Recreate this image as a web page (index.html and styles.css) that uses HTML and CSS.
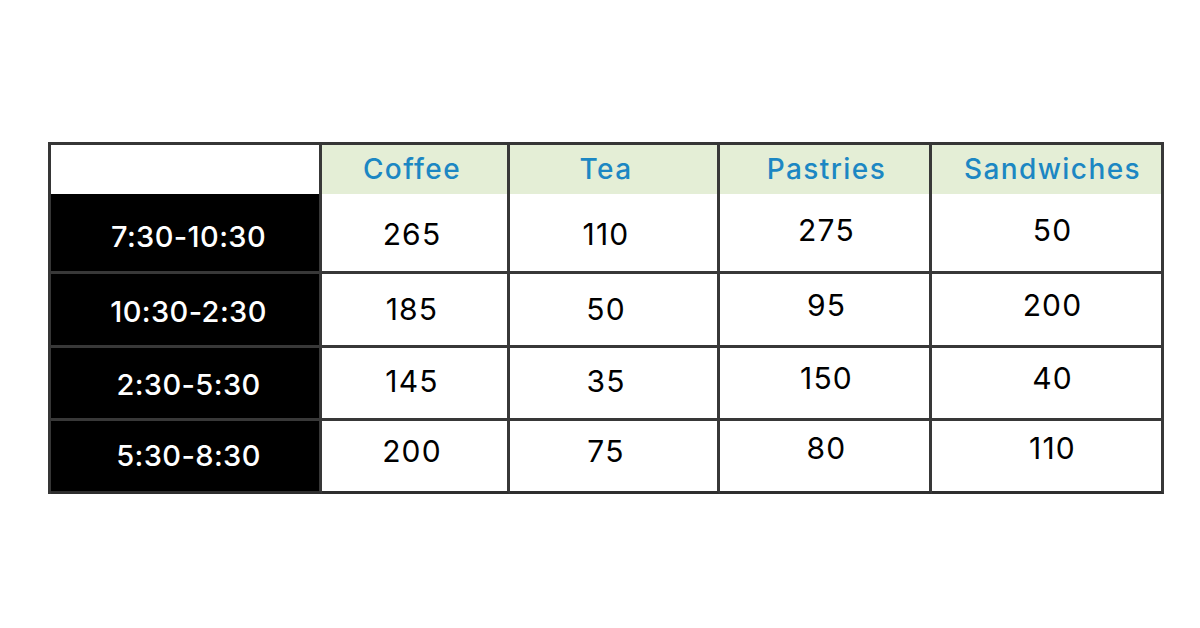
FILE: index.html
```html
<!DOCTYPE html>
<html lang="en">
<head>
<meta charset="utf-8">
<title>Sales by time of day</title>
<link rel="stylesheet" href="styles.css">
</head>
<body>
<main class="page">
  <div class="sales" role="table">
    <div class="row head-row" role="row">
      <div class="cell head blank" role="columnheader"></div>
      <div class="cell head c2" role="columnheader">Coffee</div>
      <div class="cell head c3" role="columnheader">Tea</div>
      <div class="cell head c4" role="columnheader">Pastries</div>
      <div class="cell head c5" role="columnheader">Sandwiches</div>
    </div>
    <div class="row r1" role="row">
      <div class="cell label" role="rowheader">7:30-10:30</div>
      <div class="cell val c2">265</div>
      <div class="cell val c3">110</div>
      <div class="cell val up c4">275</div>
      <div class="cell val up c5">50</div>
    </div>
    <div class="row r2" role="row">
      <div class="cell label" role="rowheader">10:30-2:30</div>
      <div class="cell val c2">185</div>
      <div class="cell val c3">50</div>
      <div class="cell val up c4">95</div>
      <div class="cell val up c5">200</div>
    </div>
    <div class="row r3" role="row">
      <div class="cell label" role="rowheader">2:30-5:30</div>
      <div class="cell val c2">145</div>
      <div class="cell val c3">35</div>
      <div class="cell val up c4">150</div>
      <div class="cell val up c5">40</div>
    </div>
    <div class="row r4" role="row">
      <div class="cell label" role="rowheader">5:30-8:30</div>
      <div class="cell val c2">200</div>
      <div class="cell val c3">75</div>
      <div class="cell val up c4">80</div>
      <div class="cell val up c5">110</div>
    </div>
  </div>
</main>
</body>
</html>
```
FILE: styles.css
```css
html, body {
  margin: 0;
  padding: 0;
  background: #ffffff;
}

.page {
  width: 1200px;
  height: 628px;
  box-sizing: border-box;
  padding: 142px 0 0 48px;
  font-family: "Inter", "Liberation Sans", sans-serif;
}

.sales {
  display: grid;
  grid-template-rows: 49px 80px 74px 73px 73px;
  width: max-content;
  border-top: 3px solid #363636;
  border-left: 3px solid #363636;
}

.row {
  display: grid;
  grid-template-columns: 271px 188px 210px 212px 232px;
}

.cell {
  box-sizing: border-box;
  display: flex;
  align-items: center;
  justify-content: center;
  border-right: 3px solid #383838;
  border-bottom: 3px solid #383838;
  white-space: nowrap;
}

.head {
  border-bottom: none;
  background: #e4eed6;
  color: #1c87c3;
  font-size: 28px;
  font-weight: 500;
  letter-spacing: 1.4px;
  padding-bottom: 1px;
}

.head.blank {
  background: #ffffff;
}

.label {
  background: #000000;
  color: #ffffff;
  font-size: 29px;
  font-weight: 500;
  letter-spacing: 0.4px;
  padding-left: 7px;
}

.val {
  color: #000000;
  font-size: 30px;
  font-weight: 400;
  letter-spacing: 1.2px;
}

/* column centring offsets */
.head.c2, .val.c2 { padding-right: 5px; }
.head.c3, .val.c3 { padding-right: 15px; }
.head.c4, .val.c4 { padding-left: 4px; }
.head.c5, .val.c5 { padding-left: 12px; }

/* vertical offsets of text inside each row */
.r1 .label { padding-top: 7px; }
.r1 .val { padding-top: 2px; }
.r1 .val.up { padding-top: 0; padding-bottom: 5px; }

.r2 .label { padding-top: 3px; }
.r2 .val { padding-bottom: 1px; }
.r2 .val.up { padding-bottom: 9px; }

.r3 .label { padding-top: 3px; }
.r3 .val { padding-bottom: 5px; }
.r3 .val.up { padding-bottom: 11px; }

.r4 .label { padding-bottom: 2px; }
.r4 .val { padding-bottom: 10px; }
.r4 .val.up { padding-bottom: 17px; }

.r4 .cell { border-bottom-color: #2e2e2e; }
```
